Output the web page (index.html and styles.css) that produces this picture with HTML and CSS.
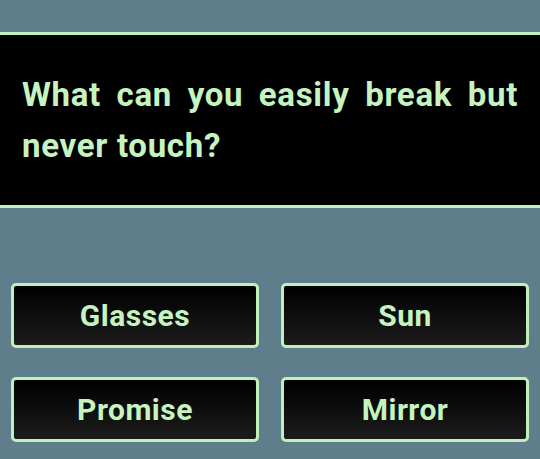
FILE: index.html
```html
<!DOCTYPE html>
<html lang="en">
<head>
<meta charset="utf-8">
<title>Riddle</title>
<link rel="stylesheet" href="styles.css">
</head>
<body>
<main class="quiz">
  <section class="question">
    <p class="question-text">What can you easily break but never touch?</p>
  </section>
  <div class="answers">
    <button class="answer">Glasses</button>
    <button class="answer">Sun</button>
    <button class="answer">Promise</button>
    <button class="answer">Mirror</button>
  </div>
</main>
</body>
</html>
```

FILE: styles.css
```css
html, body {
  margin: 0;
  padding: 0;
  background: #607d8b;
  width: 540px;
  height: 459px;
  overflow: hidden;
}
.quiz {
  padding-top: 32px;
  font-family: Roboto, "Liberation Sans", sans-serif;
}
.question {
  background: #000;
  border-top: 3px solid #c1f2bf;
  border-bottom: 3px solid #c1f2bf;
  padding: 34px 22px;
}
.question-text {
  margin: 0;
  color: #c6f4c0;
  font-size: 33px;
  font-weight: 700;
  line-height: 51px;
  letter-spacing: 0.7px;
  text-align: justify;
}
.answers {
  margin-top: 75px;
  padding: 0 11px;
  display: grid;
  grid-template-columns: 248px 248px;
  column-gap: 22px;
  row-gap: 29px;
}
.answer {
  height: 65px;
  margin: 0;
  padding: 0;
  border: 3px solid #bff0bc;
  border-radius: 5px;
  background: linear-gradient(to bottom, #000 0%, #1c1c1c 100%);
  color: #c6f4c0;
  font-family: Roboto, "Liberation Sans", sans-serif;
  font-size: 30px;
  font-weight: 700;
  letter-spacing: 0.5px;
  cursor: pointer;
}
```
